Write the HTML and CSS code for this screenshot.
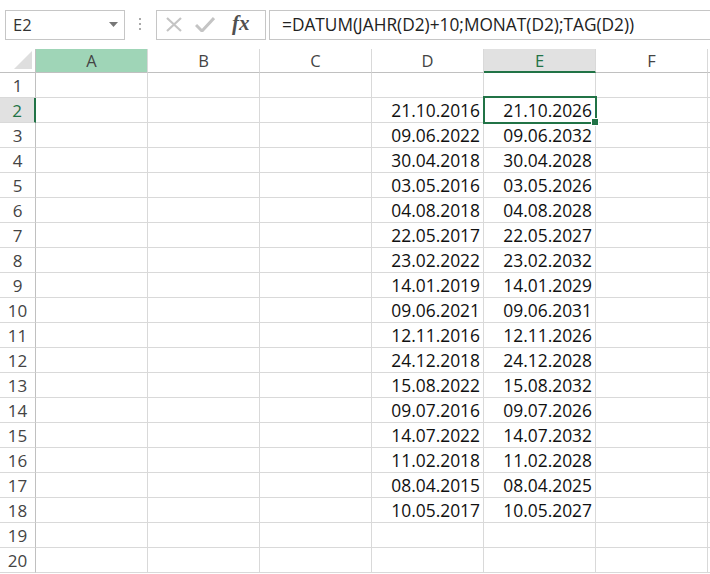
FILE: index.html
```html
<!DOCTYPE html>
<html>
<head>
<meta charset="UTF-8">
<title>Mappe1 - Excel</title>
<link rel="stylesheet" href="styles.css">
</head>
<body>

    <div class="toolbar">
        <div class="namebox">
            <span>E2</span>
            <svg class="drop" width="9" height="5" viewBox="0 0 9 5"><path d="M0 0h9L4.5 5z" fill="#777"/></svg>
        </div>
        <div class="grip">
            <svg width="3" height="13" viewBox="0 0 3 13"><rect x="0" y="0" width="2" height="2" fill="#aaa"/><rect x="0" y="5" width="2" height="2" fill="#aaa"/><rect x="0" y="10" width="2" height="2" fill="#aaa"/></svg>
        </div>
        <div class="fxbox">
            <svg width="16" height="15" viewBox="0 0 16 15"><path d="M1 1l14 13M15 1L1 14" stroke="#c4c4c4" stroke-width="2.2" fill="none"/></svg>
            <svg width="20" height="15" viewBox="0 0 20 15"><path d="M1 8l6 6L19 1" stroke="#c4c4c4" stroke-width="3" fill="none"/></svg>
            <span class="fx">fx</span>
        </div>
        <div class="formula">=DATUM(JAHR(D2)+10;MONAT(D2);TAG(D2))</div>
    </div>

    <div class="sheet" id="sheet">
        <div class="corner">
            <svg width="18" height="18" viewBox="0 0 18 18"><path d="M18 0V18H0z" fill="#dedede"/></svg>
        </div>
        <div class="colhead sel">A</div>
        <div class="colhead">B</div>
        <div class="colhead">C</div>
        <div class="colhead">D</div>
        <div class="colhead active">E</div>
        <div class="colhead">F</div>
        <div class="colhead stub"></div>
    </div>

<script>
    const sheet = document.getElementById("sheet");
    const dates = [
        ["21.10.2016", "21.10.2026"],
        ["09.06.2022", "09.06.2032"],
        ["30.04.2018", "30.04.2028"],
        ["03.05.2016", "03.05.2026"],
        ["04.08.2018", "04.08.2028"],
        ["22.05.2017", "22.05.2027"],
        ["23.02.2022", "23.02.2032"],
        ["14.01.2019", "14.01.2029"],
        ["09.06.2021", "09.06.2031"],
        ["12.11.2016", "12.11.2026"],
        ["24.12.2018", "24.12.2028"],
        ["15.08.2022", "15.08.2032"],
        ["09.07.2016", "09.07.2026"],
        ["14.07.2022", "14.07.2032"],
        ["11.02.2018", "11.02.2028"],
        ["08.04.2015", "08.04.2025"],
        ["10.05.2017", "10.05.2027"]
    ];
    for (let r = 1; r <= 20; r++) {
        let head = document.createElement("div");
        head.className = r == 2 ? "rowhead active" : "rowhead";
        head.textContent = r;
        sheet.appendChild(head);
        let row = dates[r - 2] || ["", ""];
        let values = ["", "", "", row[0], row[1], "", ""];
        values.forEach((v, i) => {
            let cell = document.createElement("div");
            cell.className = i == 6 ? "cell stub" : "cell";
            if (r == 2 && i == 4) {
                cell.className += " current";
            }
            cell.textContent = v;
            sheet.appendChild(cell);
        });
    }
</script>
</body>
</html>
```

FILE: styles.css
```css
:root {
    --green: #217346;
    --grid: #d9d9d9;
    --headline: #c0c0c0;
}
body {
    margin: 0;
    width: 710px;
    height: 574px;
    overflow: hidden;
    background: white;
    font-family: "Open Sans", "Liberation Sans", sans-serif;
    color: #222;
}
.toolbar {
    display: flex;
    align-items: center;
    height: 49px;
    padding-left: 5px;
    box-sizing: border-box;
}
.namebox {
    width: 120px;
    height: 30px;
    box-sizing: border-box;
    border: 1px solid #c6c6c6;
    display: flex;
    align-items: center;
    justify-content: space-between;
    padding: 0 6px 0 7px;
    font-size: 16.5px;
    color: #333;
}
.grip {
    width: 31px;
    display: flex;
    justify-content: center;
    padding-right: 1px;
    box-sizing: border-box;
}
.fxbox {
    width: 110px;
    height: 30px;
    box-sizing: border-box;
    border: 1px solid #c6c6c6;
    display: flex;
    align-items: center;
    gap: 13px;
    padding-left: 9px;
}
.fx {
    font-family: "Liberation Serif", "DejaVu Serif", serif;
    font-style: italic;
    font-weight: bold;
    font-size: 21px;
    color: #505050;
    margin-left: 4px;
    margin-top: -3px;
}
.formula {
    flex: 1;
    height: 30px;
    margin-left: 3px;
    box-sizing: border-box;
    border: 1px solid #c6c6c6;
    border-right: none;
    display: flex;
    align-items: center;
    padding-left: 12px;
    font-size: 17.3px;
    color: #222;
}
.sheet {
    display: grid;
    grid-template-columns: 36px repeat(6, 112px) 2px;
    grid-template-rows: 24px repeat(20, 25px);
}
.sheet > div {
    box-sizing: border-box;
    border-right: 1px solid var(--grid);
    border-bottom: 1px solid var(--grid);
}
.corner {
    display: flex;
    align-items: flex-end;
    justify-content: flex-end;
    padding: 0 3px 3px 0;
    border-right-color: var(--headline) !important;
    border-bottom-color: var(--headline) !important;
}
.colhead {
    display: flex;
    align-items: center;
    justify-content: center;
    font-size: 16.5px;
    color: #444;
    border-bottom-color: var(--headline) !important;
}
.colhead.sel {
    background: #9fd5b7;
}
.colhead.active {
    background: #e1e1e1;
    color: var(--green);
    border-bottom: 2px solid var(--green) !important;
}
.rowhead {
    display: flex;
    align-items: center;
    justify-content: center;
    font-size: 17px;
    color: #444;
    border-right-color: var(--headline) !important;
}
.rowhead.active {
    background: #e1e1e1;
    color: var(--green);
    border-right: 2px solid var(--green) !important;
}
.cell {
    display: flex;
    align-items: center;
    justify-content: flex-end;
    padding-right: 3px;
    font-size: 17.4px;
    color: #111;
    white-space: nowrap;
}
.stub {
    border-right: none !important;
}
.current {
    position: relative;
}
.current::after {
    content: "";
    position: absolute;
    left: -1px;
    top: -2px;
    right: -2px;
    bottom: -2px;
    border: 2px solid var(--green);
}
.current::before {
    content: "";
    position: absolute;
    right: -4px;
    bottom: -4px;
    width: 6px;
    height: 6px;
    background: var(--green);
    border: 1px solid white;
    z-index: 1;
}
```
